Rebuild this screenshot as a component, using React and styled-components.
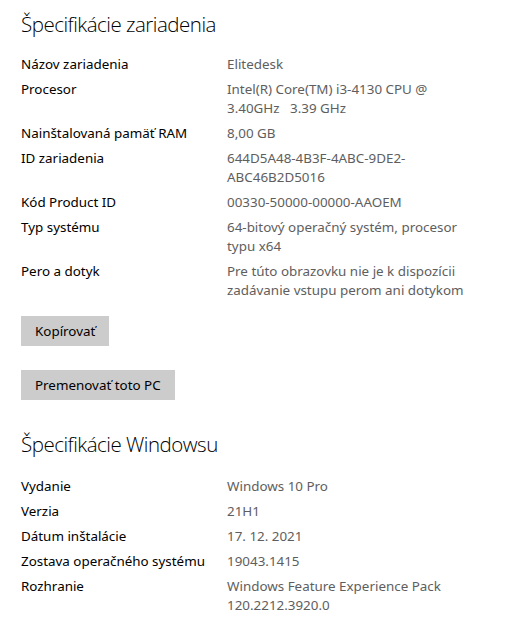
import React from 'react';
import styled, { createGlobalStyle } from 'styled-components';

const GlobalStyle = createGlobalStyle`
  html, body {
    margin: 0;
    padding: 0;
    background: #ffffff;
  }
  body {
    font-family: 'Noto Sans', 'Open Sans', sans-serif;
    -webkit-font-smoothing: antialiased;
  }
`;

const Page = styled.div`
  width: 512px;
  height: 618px;
  box-sizing: border-box;
  padding: 10px 0 0 21px;
  background: #ffffff;
  overflow: hidden;
`;

const Heading = styled.h2`
  margin: ${(p) => p.$top || 0}px 0 ${(p) => p.$gap || 14}px;
  font-family: 'Open Sans', 'Noto Sans', sans-serif;
  font-size: 20.5px;
  font-weight: 300;
  letter-spacing: -0.5px;
  line-height: 28px;
  color: #000000;
`;

const SpecList = styled.div`
  display: flex;
  flex-direction: column;
  gap: 6px;
`;

const SpecRow = styled.div`
  display: grid;
  grid-template-columns: 206px 1fr;
  font-size: 13.4px;
  line-height: 19px;
`;

const Label = styled.span`
  color: #000000;
`;

const Value = styled.span`
  color: #5e5e5e;
  white-space: pre;
`;

const Button = styled.button`
  display: block;
  height: 30px;
  padding: 0 14px;
  border: none;
  background: #cccccc;
  color: #000000;
  font-family: inherit;
  font-size: 13.4px;
  cursor: pointer;
  margin-top: ${(p) => p.$top || 0}px;
`;

const device = [
  { label: 'Názov zariadenia', value: ['Elitedesk'] },
  { label: 'Procesor', value: ['Intel(R) Core(TM) i3-4130 CPU @', '3.40GHz   3.39 GHz'] },
  { label: 'Nainštalovaná pamäť RAM', value: ['8,00 GB'] },
  { label: 'ID zariadenia', value: ['644D5A48-4B3F-4ABC-9DE2-', 'ABC46B2D5016'] },
  { label: 'Kód Product ID', value: ['00330-50000-00000-AAOEM'] },
  { label: 'Typ systému', value: ['64-bitový operačný systém, procesor', 'typu x64'] },
  {
    label: 'Pero a dotyk',
    value: ['Pre túto obrazovku nie je k dispozícii', 'zadávanie vstupu perom ani dotykom'],
  },
];

const windows = [
  { label: 'Vydanie', value: ['Windows 10 Pro'] },
  { label: 'Verzia', value: ['21H1'] },
  { label: 'Dátum inštalácie', value: ['17. 12. 2021'] },
  { label: 'Zostava operačného systému', value: ['19043.1415'] },
  { label: 'Rozhranie', value: ['Windows Feature Experience Pack', '120.2212.3920.0'] },
];

const Specs = ({ items }) => (
  <SpecList>
    {items.map((item) => (
      <SpecRow key={item.label}>
        <Label>{item.label}</Label>
        <Value>{item.value.join('\n')}</Value>
      </SpecRow>
    ))}
  </SpecList>
);

const App = () => {
  return (
    <Page>
      <GlobalStyle />
      <Heading $gap={17}>Špecifikácie zariadenia</Heading>
      <Specs items={device} />
      <Button $top={16}>Kopírovať</Button>
      <Button $top={24}>Premenovať toto PC</Button>
      <Heading $top={30} $gap={19}>
        Špecifikácie Windowsu
      </Heading>
      <Specs items={windows} />
    </Page>
  );
};

export default App;
